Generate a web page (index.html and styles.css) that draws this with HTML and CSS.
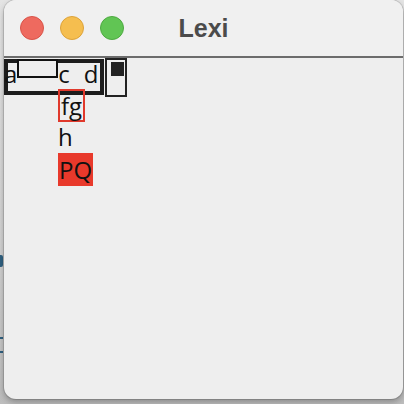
FILE: index.html
```html
<!DOCTYPE html>
<html>
<head>
<meta charset="utf-8">
<link rel="stylesheet" href="styles.css">
</head>
<body>
<div class="desk-mark mark-a"></div>
<div class="desk-mark mark-b"></div>
<div class="window">
  <div class="titlebar">
    <div class="lights">
      <span class="light red"></span>
      <span class="light yellow"></span>
      <span class="light green"></span>
    </div>
    <div class="title">Lexi</div>
    <div></div>
  </div>
  <div class="content">
    <div class="row1">
      <div class="bigbox">
        <span class="g">a</span>
        <span class="rect"></span>
        <span class="g">c</span>
        <span class="g gd">d</span>
      </div>
      <div class="smallbox"><span class="sq"></span></div>
    </div>
    <div class="col">
      <div class="line"><span class="fg">fg</span></div>
      <div class="line">h</div>
      <div class="line"><span class="pq">PQ</span></div>
    </div>
  </div>
</div>
</body>
</html>
```
FILE: styles.css
```css
html, body {
  margin: 0;
  padding: 0;
}
body {
  width: 404px;
  height: 404px;
  overflow: hidden;
  background: linear-gradient(180deg, #e4e4e4 0%, #d2d2d2 60%, #bdbdbd 100%);
  position: relative;
  font-family: "Open Sans", "Noto Sans", sans-serif;
}
.desk-mark {
  position: absolute;
  left: 0;
  background: #2f6080;
}
.mark-a {
  top: 255px;
  width: 3px;
  height: 12px;
  border-radius: 0 2px 2px 0;
}
.mark-b {
  top: 337px;
  width: 3px;
  height: 16px;
  background: transparent;
  border-top: 2px solid #2f6080;
  border-bottom: 2px solid #2f6080;
  box-sizing: border-box;
}
.window {
  margin-left: 4px;
  width: 399px;
  height: 399px;
  border-radius: 12px;
  background: #eeeeee;
  overflow: hidden;
  box-shadow: 0 0 0 1px rgba(0,0,0,0.12), 0 3px 6px rgba(0,0,0,0.28);
  position: relative;
}
.titlebar {
  height: 56px;
  background: #f0f0f0;
  border-bottom: 2px solid #6c6c6c;
  box-sizing: content-box;
  display: grid;
  grid-template-columns: 1fr auto 1fr;
  align-items: center;
}
.lights {
  display: flex;
  gap: 16px;
  padding-left: 16px;
}
.light {
  width: 24px;
  height: 24px;
  border-radius: 50%;
  box-sizing: border-box;
}
.red { background: #ee6a5f; border: 1px solid #d95449; }
.yellow { background: #f5be4f; border: 1px solid #dda33a; }
.green { background: #61c554; border: 1px solid #4eaa41; }
.title {
  font-family: "Liberation Sans", Arial, sans-serif;
  font-weight: bold;
  font-size: 25px;
  color: #4b4b4b;
  line-height: 25px;
}
.content {
  color: #111;
  font-size: 24px;
}
.row1 {
  height: 31px;
  display: flex;
  align-items: flex-start;
}
.bigbox {
  width: 100px;
  height: 36px;
  margin-top: 1px;
  box-shadow: inset 0 0 0 4px #1c1c1c;
  display: flex;
  align-items: flex-start;
  line-height: 30px;
  flex: none;
}
.g { flex: none; }
.gd { margin-left: 14px; }
.rect {
  flex: none;
  width: 41px;
  height: 19px;
  border: 2px solid #111;
  background: #eeeeee;
  box-sizing: border-box;
}
.smallbox {
  flex: none;
  margin-left: 1px;
  width: 22px;
  height: 39px;
  border: 2px solid #222;
  box-sizing: border-box;
  padding: 2px 0 0 4px;
}
.sq {
  display: block;
  width: 13px;
  height: 14px;
  background: #222;
}
.col {
  margin-left: 54px;
  display: flex;
  flex-direction: column;
  align-items: flex-start;
}
.line {
  height: 32px;
  line-height: 32px;
}
.fg {
  display: inline-block;
  border: 2px solid #e0392c;
  padding: 0 1px;
  line-height: 29px;
}
.pq {
  display: inline-block;
  background: #e8392b;
  padding: 0 1px;
  line-height: 33px;
}
```
